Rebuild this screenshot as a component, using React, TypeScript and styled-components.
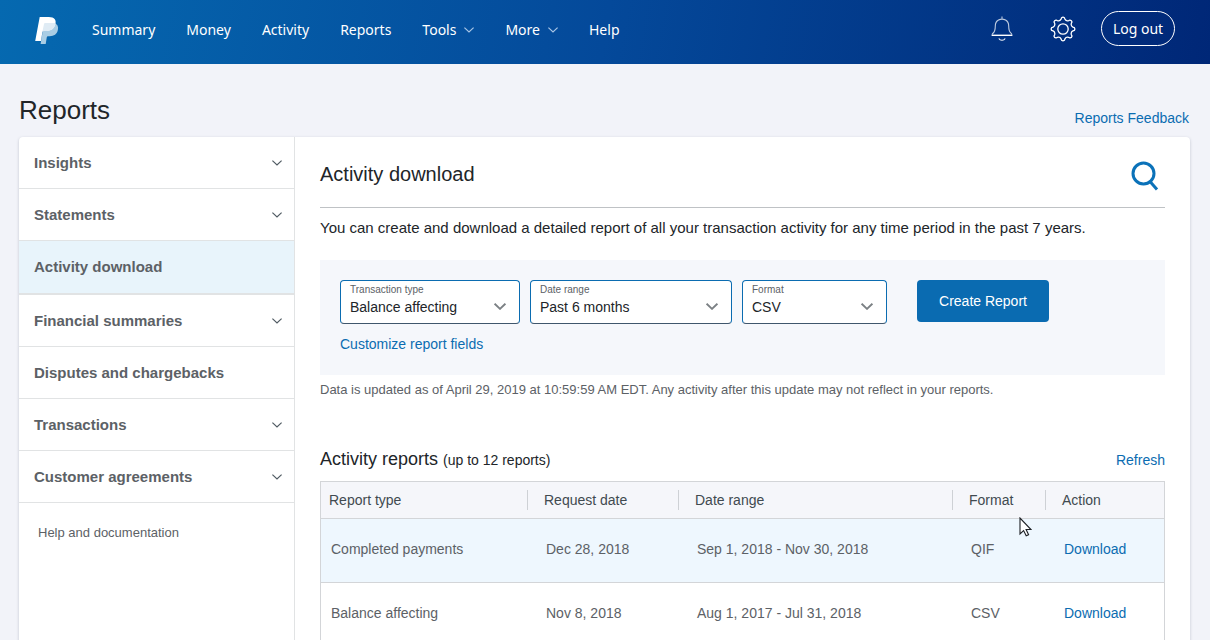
import React from "react";
import styled, { createGlobalStyle } from "styled-components";

const GlobalStyle = createGlobalStyle`
  *, *::before, *::after { box-sizing: border-box; }
  body {
    margin: 0;
    background: #f2f3f9;
    color: #212529;
    font: 14px/20px "Liberation Sans", Arial, sans-serif;
  }
  a { color: #0b6cb1; text-decoration: none; }
  h1, h2, h3, p { margin: 0; font-weight: 400; }
  button, select { font: inherit; }
`;

const Page = styled.div`
  position: relative;
  min-height: 100vh;
`;

const Header = styled.header`
  display: flex;
  align-items: center;
  height: 64px;
  padding: 0 35px;
  background: linear-gradient(100deg, #0569b0 0%, #04499a 50%, #002777 100%);
  color: #fff;
  font-family: "Noto Sans", "Open Sans", sans-serif;

  & > svg { margin-bottom: 3px; }
`;

const Nav = styled.nav`
  display: flex;
  gap: 31px;
  margin: 0 auto 4px 33px;
`;

const NavLink = styled.a`
  display: flex;
  align-items: center;
  gap: 8px;
  color: #fff;
`;

const Account = styled.div`
  display: flex;
  align-items: center;
  margin-bottom: 7px;
`;

const IconButton = styled.button<{ $gap?: number }>`
  display: flex;
  padding: 0;
  margin-right: ${(p) => p.$gap ?? 0}px;
  border: 0;
  background: none;
  color: inherit;
  cursor: pointer;
`;

const LogOut = styled.button`
  width: 74px;
  height: 35px;
  padding: 0;
  border: 1px solid #fff;
  border-radius: 18px;
  background: none;
  color: #fff;
`;

const TitleBar = styled.div`
  display: flex;
  align-items: flex-end;
  justify-content: space-between;
  padding: 28px 21px 9px 19px;
`;

const Title = styled.h1`
  font-size: 26px;
  line-height: 36px;
`;

const Card = styled.div`
  display: flex;
  min-height: calc(100vh - 137px);
  margin: 0 20px 0 19px;
  border-radius: 4px;
  background: #fff;
  box-shadow: 0 1px 3px rgba(40, 50, 80, 0.25);
`;

const Sidebar = styled.nav`
  flex: 0 0 276px;
  border-right: 1px solid #e1e3e4;
`;

const SideLink = styled.a<{ $active?: boolean }>`
  display: flex;
  align-items: center;
  justify-content: space-between;
  height: ${(p) => (p.$active ? 54 : 52)}px;
  padding: 0 12px 0 15px;
  border-bottom: ${(p) => (p.$active ? 2 : 1)}px solid #e1e3e4;
  background: ${(p) => (p.$active ? "#e8f4fb" : "transparent")};
  color: #5c6166;
  font-size: 15px;
  font-weight: 700;
`;

const HelpLink = styled.a`
  display: block;
  padding: 20px 19px;
  color: #5c6166;
  font-size: 13px;
`;

const Main = styled.main`
  flex: 1;
  min-width: 0;
  padding: 24px 25px 0;
`;

const SectionHead = styled.div`
  display: flex;
  justify-content: space-between;
  height: 47px;
  padding-right: 6px;
  border-bottom: 1px solid #bfc2c5;
`;

const SectionTitle = styled.h2`
  font-size: 20px;
  line-height: 26px;
`;

const Intro = styled.p`
  margin: 10px 0 22px;
  font-size: 15px;
`;

const Builder = styled.form`
  height: 115px;
  padding: 20px;
  background: #f5f7fb;
`;

const Fields = styled.div`
  display: flex;
  align-items: flex-start;
  gap: 10px;
  margin-bottom: 10px;
`;

const Field = styled.label<{ $width: number }>`
  display: grid;
  grid-template: 18px 1fr / 1fr 12px;
  align-items: center;
  width: ${(p) => p.$width}px;
  height: 44px;
  padding: 0 13px 0 9px;
  border: 1px solid #0b6cb1;
  border-bottom-color: #3f566c;
  border-radius: 4px;
  background: #fff;
  color: #5c6166;
  font-size: 10px;
  line-height: 18px;

  & > svg { grid-area: 2 / 2; margin-bottom: 10px; }
`;

const FieldName = styled.span`
  grid-area: 1 / 1;
`;

const Select = styled.select`
  grid-area: 2 / 1 / 3 / 3;
  height: 16px;
  margin-bottom: 8px;
  padding: 0;
  border: 0;
  background: none;
  color: #212529;
  font-size: 14px;
  line-height: 16px;
  appearance: none;
`;

const CreateButton = styled.button`
  width: 132px;
  height: 42px;
  margin-left: 20px;
  padding: 0;
  border: 0;
  border-radius: 4px;
  background: #0a6bb1;
  color: #fff;
`;

const Updated = styled.p`
  margin: 5px 0 47px;
  color: #5c6166;
  font-size: 13px;
`;

const ReportsHead = styled.div`
  display: flex;
  align-items: baseline;
  justify-content: space-between;
  margin-bottom: 9px;
`;

const ReportsTitle = styled.h3`
  font-size: 18px;
  line-height: 24px;

  small { font-size: 14px; }
`;

const Table = styled.table`
  width: 100%;
  border: 1px solid #d3d5d8;
  border-bottom: 0;
  border-spacing: 0;
  table-layout: fixed;
  text-align: left;
`;

const HeadCell = styled.th<{ $width?: number }>`
  width: ${(p) => (p.$width ? `${p.$width}px` : "auto")};
  height: 37px;
  padding: 0;
  border-bottom: 1px solid #d3d5d8;
  background: #f5f6fa;
  color: #414a50;
  font-weight: 400;

  span { display: block; padding-left: 16px; border-left: 1px solid #ced1d5; }
  &:first-child span { padding-left: 8px; border-left: 0; }
`;

const Cell = styled.td`
  height: 64px;
  padding: 0 0 3px 19px;
  border-bottom: 1px solid #d3d5d8;
  color: #5c6166;

  &:first-child { padding-left: 10px; }
`;

const Row = styled.tr<{ $highlight?: boolean }>`
  background: ${(p) => (p.$highlight ? "#eef7fe" : "#fff")};
`;

const Pointer = styled.svg`
  position: absolute;
  left: 1019px;
  top: 517px;
  pointer-events: none;
`;

const Chevron = ({ size = 10, color = "#4f5a62", weight = 1.2 }) => (
  <svg width={size} height={size / 2 + 1} viewBox="0 0 10 6" fill="none" stroke={color} strokeWidth={weight} aria-hidden="true">
    <path d="M.4.6 5 5 9.6.6" />
  </svg>
);

const Logo = () => (
  <svg width="24" height="28" viewBox="0 0 24 28" aria-label="PayPal">
    <path fill="#a9cde4" d="M19.6 6.2c2.7 1 4 3.1 3.3 6.6-1 4.7-3.9 6.400-8.2 6.400h-1.8c-.6 0-1 .4-1.100 1L10.700 27H5.600L9 6.200z" />
    <path fill="#fff" d="M4.700.1h9.100c2.800 0 4.900.7 6 2.100.9 1.200 1 2.500.7 4.100-.8 5-3.900 7.600-9.200 7.600H8.600c-.7 0-1.100.4-1.200 1.100L6 24H.2z" />
    <path fill="#dfebf4" d="M20.500 6.200c-.8 5-3.900 7.700-9.200 7.700H8.600c-.6 0-1 .3-1.200.9L9 6.900c.1-.6.5-.9 1.100-.9H18c.9 0 1.800.1 2.500.2z" />
  </svg>
);

const Bell = () => (
  <svg width="22" height="26" viewBox="0 0 22 26" fill="none" stroke="currentColor" strokeWidth="1.1" aria-hidden="true">
    <path strokeOpacity=".75" d="M11 .5v3M1.200 18.600c.1-.6.3-1 .8-1.400 1.700-1.400 2.300-3.300 2.300-7.200 0-2.800 1-4.700 3.200-5.900 2-1.100 5-1.100 7 0 2.200 1.200 3.200 3.100 3.200 5.900 0 3.900.6 5.800 2.300 7.200.5.4.7.8.8 1.400" />
    <path strokeWidth="1.400" d="M.6 19.300h20.800" />
    <path d="M7.800 22.500c1.400 2.400 5 2.400 6.400 0" />
  </svg>
);

const TEETH = 8;
const gearPath = Array.from({ length: TEETH }, (_, i) => {
  const at = (r: number, deg: number) => {
    const a = ((i * 360) / TEETH + deg - 90) * (Math.PI / 180);
    return `${(13 + r * Math.cos(a)).toFixed(2)} ${(13 + r * Math.sin(a)).toFixed(2)}`;
  };
  return `${i ? "L" : "M"}${at(11.4, -7)}Q${at(12.3, 0)} ${at(11.4, 7)}L${at(10.1, 11)}Q${at(8.2, 22.5)} ${at(10.1, 34)}`;
}).join("");

const Gear = () => (
  <svg width="26" height="26" viewBox="0 0 26 26" fill="none" stroke="currentColor" strokeWidth="1.3" strokeLinejoin="round" aria-hidden="true">
    <path d={`${gearPath}Z`} />
    <circle cx="13" cy="13" r="5.2" />
  </svg>
);

const Search = () => (
  <svg width="28" height="30" viewBox="0 0 28 30" fill="none" stroke="#0b72b9" strokeWidth="3" aria-hidden="true">
    <circle cx="12.5" cy="12.5" r="10.5" />
    <path d="M19 20.5 26 28.5" />
  </svg>
);

const navItems = [
  { name: "Summary" },
  { name: "Money" },
  { name: "Activity" },
  { name: "Reports" },
  { name: "Tools", menu: true },
  { name: "More", menu: true },
  { name: "Help" },
];

const sideItems = [
  { name: "Insights", menu: true },
  { name: "Statements", menu: true },
  { name: "Activity download", active: true },
  { name: "Financial summaries", menu: true },
  { name: "Disputes and chargebacks" },
  { name: "Transactions", menu: true },
  { name: "Customer agreements", menu: true },
];

const fields = [
  { name: "Transaction type", value: "Balance affecting", width: 180 },
  { name: "Date range", value: "Past 6 months", width: 202 },
  { name: "Format", value: "CSV", width: 145 },
];

const columns = [
  { name: "Report type", width: 206 },
  { name: "Request date", width: 151 },
  { name: "Date range" },
  { name: "Format", width: 93 },
  { name: "Action", width: 119 },
];

const reports = [
  ["Completed payments", "Dec 28, 2018", "Sep 1, 2018 - Nov 30, 2018", "QIF"],
  ["Balance affecting", "Nov 8, 2018", "Aug 1, 2017 - Jul 31, 2018", "CSV"],
];

export default function App() {
  return (
    <Page>
      <GlobalStyle />
      <Header>
        <Logo />
        <Nav>
          {navItems.map((item) => (
            <NavLink key={item.name} href="#">
              {item.name}
              {item.menu && <Chevron color="#a9c6e6" />}
            </NavLink>
          ))}
        </Nav>
        <Account>
          <IconButton $gap={37} aria-label="Notifications"><Bell /></IconButton>
          <IconButton $gap={25} aria-label="Settings"><Gear /></IconButton>
          <LogOut>Log out</LogOut>
        </Account>
      </Header>

      <TitleBar>
        <Title>Reports</Title>
        <a href="#">Reports Feedback</a>
      </TitleBar>

      <Card>
        <Sidebar>
          {sideItems.map((item) => (
            <SideLink key={item.name} href="#" $active={item.active}>
              {item.name}
              {item.menu && <Chevron />}
            </SideLink>
          ))}
          <HelpLink href="#">Help and documentation</HelpLink>
        </Sidebar>

        <Main>
          <SectionHead>
            <SectionTitle>Activity download</SectionTitle>
            <IconButton aria-label="Search"><Search /></IconButton>
          </SectionHead>
          <Intro>
            You can create and download a detailed report of all your transaction activity for any time period in the past 7 years.
          </Intro>

          <Builder>
            <Fields>
              {fields.map((f) => (
                <Field key={f.name} $width={f.width}>
                  <FieldName>{f.name}</FieldName>
                  <Select defaultValue={f.value}>
                    <option>{f.value}</option>
                  </Select>
                  <Chevron size={12} color="#7b8084" weight={1.6} />
                </Field>
              ))}
              <CreateButton type="button">Create Report</CreateButton>
            </Fields>
            <a href="#">Customize report fields</a>
          </Builder>
          <Updated>
            Data is updated as of April 29, 2019 at 10:59:59 AM EDT. Any activity after this update may not reflect in your reports.
          </Updated>

          <ReportsHead>
            <ReportsTitle>
              Activity reports <small>(up to 12 reports)</small>
            </ReportsTitle>
            <a href="#">Refresh</a>
          </ReportsHead>
          <Table>
            <thead>
              <tr>
                {columns.map((c) => (
                  <HeadCell key={c.name} $width={c.width} scope="col">
                    <span>{c.name}</span>
                  </HeadCell>
                ))}
              </tr>
            </thead>
            <tbody>
              {reports.map((cells, i) => (
                <Row key={cells[0]} $highlight={i === 0}>
                  {cells.map((text) => (
                    <Cell key={text}>{text}</Cell>
                  ))}
                  <Cell><a href="#">Download</a></Cell>
                </Row>
              ))}
            </tbody>
          </Table>
        </Main>
      </Card>

      <Pointer width="13" height="20" viewBox="0 0 13 20" aria-hidden="true">
        <path d="M1 1v16l3.6-3.4 2.6 5.2 2.4-1.1L7.1 12.5H12z" fill="#fff" stroke="#1c1f24" strokeWidth="1.1" />
      </Pointer>
    </Page>
  );
}
